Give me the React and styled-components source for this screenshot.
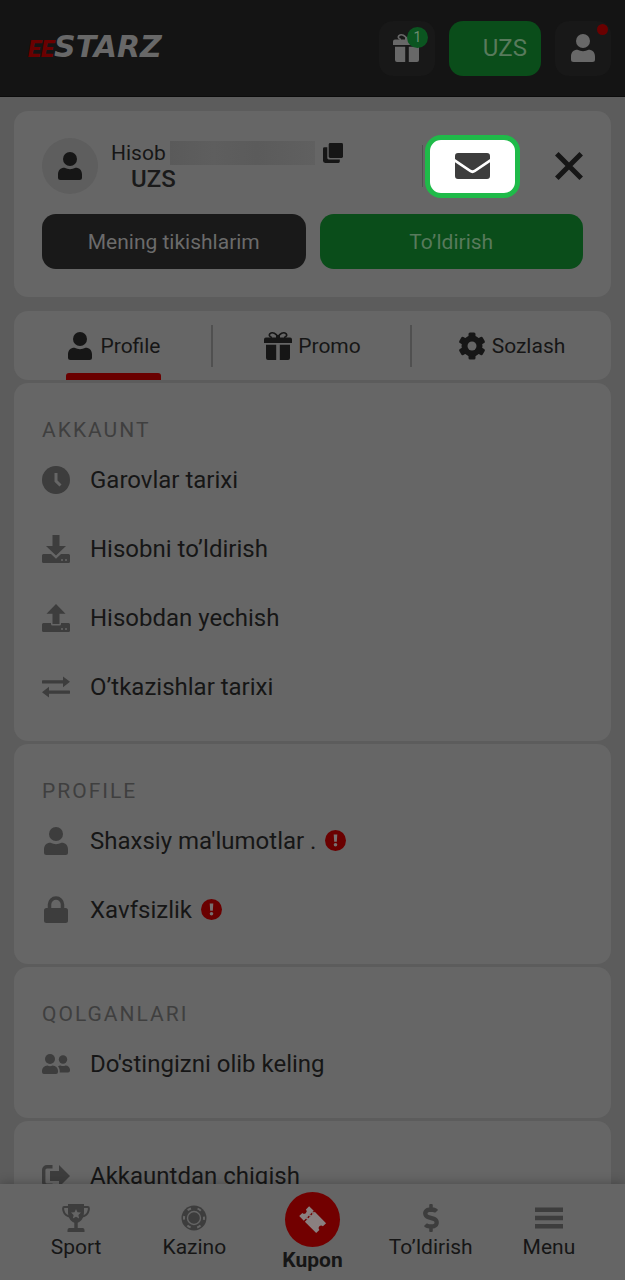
import React from 'react'
import styled, { createGlobalStyle, css } from 'styled-components'
import { FaDollarSign } from 'react-icons/fa'

const GlobalStyle = createGlobalStyle`
  * {
    box-sizing: border-box;
  }

  body {
    margin: 0;
    background: #5c5c5c;
    color: #161616;
    font-family: Roboto, 'Noto Sans', sans-serif;
    font-size: 21px;
    line-height: 26px;
  }

  a {
    color: inherit;
    text-decoration: none;
  }

  button {
    padding: 0;
    border: 0;
    background: none;
    color: inherit;
    font: inherit;
    cursor: pointer;
  }

  svg {
    display: block;
    flex: none;
  }
`

const Shell = styled.div`
  display: flex;
  flex-direction: column;
  height: 100vh;
`

const Header = styled.header`
  flex: none;
  display: flex;
  align-items: center;
  justify-content: space-between;
  height: 97px;
  padding: 0 14px 0 28px;
  background: #141414;
  border-bottom: 1px solid #0c0c0c;
`

const Logo = styled.a`
  display: flex;
  align-items: baseline;
  font-family: 'DejaVu Sans', sans-serif;
  font-size: 30px;
  font-weight: 700;
  font-style: italic;
  color: #686868;
`

const LogoMark = styled.span`
  font-family: Roboto, sans-serif;
  font-size: 24px;
  font-weight: 900;
  color: #6a0000;
`

const HeaderActions = styled.div`
  display: flex;
  gap: 14px;
`

const Tile = styled.button`
  position: relative;
  display: flex;
  align-items: center;
  justify-content: center;
  width: 56px;
  height: 55px;
  border-radius: 14px;
  background: #181818;
  color: #686868;
`

const Balance = styled(Tile)`
  justify-content: flex-end;
  width: 92px;
  padding-right: 14px;
  background: #0a4d1a;
  color: #587a5c;
  font-size: 24px;
`

const Badge = styled.span`
  position: absolute;
  top: 6px;
  right: 7px;
  width: 21px;
  height: 21px;
  border-radius: 50%;
  background: #0b5520;
  color: #6d8a70;
  font-size: 14px;
  line-height: 21px;
  text-align: center;
`

const Dot = styled.span`
  position: absolute;
  top: 3px;
  right: 3px;
  width: 11px;
  height: 11px;
  border-radius: 50%;
  background: #6a0000;
`

const Main = styled.main`
  flex: 1;
  min-height: 0;
  overflow-y: auto;
  scrollbar-width: none;
  padding: 14px;
`

const Card = styled.section`
  border-radius: 14px;
  background: #666666;
`

const AccountCard = styled(Card)`
  margin-bottom: 14px;
  padding: 27px 28px 28px;
`

const AccountRow = styled.div`
  display: flex;
  align-items: center;
  height: 56px;
  margin-bottom: 20px;
`

const Avatar = styled.div`
  display: flex;
  align-items: center;
  justify-content: center;
  width: 56px;
  height: 56px;
  margin-right: 13px;
  border-radius: 50%;
  background: #5e5e5e;
`

const AccountInfo = styled.div`
  flex: 1;
`

const AccountLine = styled.div`
  display: flex;
  align-items: center;
`

const HiddenId = styled.span`
  width: 145px;
  height: 24px;
  margin: 0 8px 0 4px;
  background: linear-gradient(90deg, #5a5a5a, #5e5e5e 30%, #5b5b5b 60%, #606060);
`

const Currency = styled.div`
  padding-left: 20px;
  font-size: 24px;
  font-weight: 500;
  color: #1a1a1a;
`

const MailSlot = styled.div`
  display: flex;
  align-items: center;
  gap: 2px;
  margin-right: 35px;

  &::before {
    content: '';
    width: 1px;
    height: 42px;
    background: #505050;
  }
`

const MailButton = styled.button`
  display: flex;
  align-items: center;
  justify-content: center;
  width: 95px;
  height: 63px;
  border: 5px solid #1fba49;
  border-radius: 16px;
  background: #ffffff;
  color: #3d3d3d;
`

const ButtonRow = styled.div`
  display: flex;
  gap: 14px;
`

const ActionButton = styled.button`
  flex: 1;
  height: 55px;
  border-radius: 14px;
  background: ${({ $green }) => ($green ? '#0a4d1a' : '#191919')};
  color: ${({ $green }) => ($green ? '#587a5c' : '#6b6b6b')};
`

const Tabs = styled.nav`
  display: flex;
  height: 69px;
  border-radius: 14px;
  background: #666666;
`

const Tab = styled.button`
  flex: 1;
  display: flex;
  justify-content: center;
  background: ${({ $last }) => ($last ? 'none' : 'linear-gradient(#505050, #505050) right center / 2px 42px no-repeat')};
`

const TabLabel = styled.span`
  position: relative;
  display: flex;
  align-items: center;
  gap: 6px;
  height: 69px;
  ${({ $active }) =>
    $active &&
    css`
      &::after {
        content: '';
        position: absolute;
        right: 0;
        bottom: 0;
        left: 0;
        height: 7px;
        border-radius: 3px 3px 0 0;
        background: #6a0000;
      }
    `}
`

const Group = styled(Card)`
  margin-top: 3px;
  padding: ${({ $untitled }) => ($untitled ? '20px' : '32px')} 28px 20px;
`

const GroupTitle = styled.h2`
  margin: 0;
  font-size: 21px;
  font-weight: 400;
  line-height: 30px;
  letter-spacing: 2px;
  color: #3f3f3f;
`

const Row = styled.a`
  display: flex;
  align-items: center;
  gap: 20px;
  height: 69px;
  font-size: 24px;

  > svg {
    color: #3d3d3d;
  }
`

const RowText = styled.span`
  display: flex;
  align-items: center;
  gap: 9px;
`

const BottomNav = styled.nav`
  flex: none;
  position: relative;
  display: flex;
  height: 96px;
  padding: 0 17px;
  background: #656565;
  box-shadow: 0 -1px 10px rgba(0, 0, 0, 0.25);
`

const NavItem = styled.a`
  flex: 1;
  display: flex;
  flex-direction: column;
  align-items: center;
  gap: ${({ $active }) => ($active ? '0' : '2px')};
  padding-top: ${({ $active }) => ($active ? '8px' : '20px')};
  font-weight: ${({ $active }) => ($active ? 700 : 400)};

  > svg {
    color: #3d3d3d;
  }
`

const Coupon = styled.span`
  display: flex;
  align-items: center;
  justify-content: center;
  width: 55px;
  height: 55px;
  border-radius: 50%;
  background: #720000;
  color: #8a8080;
`

const Icon = ({ size = 28, children, ...rest }) => (
  <svg width={size} height={size} viewBox="0 0 28 28" fill="currentColor" aria-hidden="true" {...rest}>
    {children}
  </svg>
)

const UserIcon = () => (
  <Icon>
    <circle cx="14" cy="7" r="7" />
    <path d="M8.500 15.800c3.500 1.800 7.500 1.800 11 0 4 0 6.500 2.700 6.500 6.700V25.500a2.500 2.500 0 0 1-2.500 2.500h-19A2.500 2.500 0 0 1 2 25.500v-3c0-4 2.500-6.700 6.500-6.700z" />
  </Icon>
)

const GiftIcon = () => (
  <Icon>
    <path
      d="M14 5.5C12.5 1.5 8.5-.3 6 1.6 4.6 3 5.6 5.2 8 5.5M14 5.5C15.5 1.5 19.500-.3 22 1.600 23.400 3 22.400 5.200 20 5.500"
      fill="none"
      stroke="currentColor"
      strokeWidth="1.6"
    />
    <rect x="12" y="3" width="4" height="4" rx="1" />
    <path d="M2 5.500h24a2 2 0 0 1 2 2V11H0V7.500a2 2 0 0 1 2-2z" />
    <path d="M2 12.800h10.200V28H4a2 2 0 0 1-2-2zM15.800 12.800H26V26a2 2 0 0 1-2 2h-8.200z" />
  </Icon>
)

const GearIcon = () => (
  <Icon>
    {[0, 60, 120].map((angle) => (
      <rect key={angle} x="10.500" y="0.500" width="7" height="27" rx="1.500" transform={`rotate(${angle} 14 14)`} />
    ))}
    <circle cx="14" cy="14" r="7.500" fill="none" stroke="currentColor" strokeWidth="6" />
    <circle cx="14" cy="14" r="4.500" fill="#666666" />
  </Icon>
)

const CopyIcon = () => (
  <Icon size={20}>
    <path d="M10 0h16a2 2 0 0 1 2 2v17a2 2 0 0 1-2 2H10a2 2 0 0 1-2-2V2a2 2 0 0 1 2-2z" />
    <path d="M2 6h4v15a2 2 0 0 0 2 2h15.500v3a2 2 0 0 1-2 2H3a3 3 0 0 1-3-3V8a2 2 0 0 1 2-2z" />
  </Icon>
)

const MailIcon = () => (
  <svg width="35" height="26" viewBox="0 0 35 26" fill="currentColor" aria-hidden="true">
    <path d="M3 0h29a3 3 0 0 1 3 3v3L19.500 16.500a3.500 3.500 0 0 1-4 0L0 6V3a3 3 0 0 1 3-3z" />
    <path d="M0 9.200l14.500 9.800a5 5 0 0 0 6 0L35 9.200V23a3 3 0 0 1-3 3H3a3 3 0 0 1-3-3z" />
  </svg>
)

const CloseIcon = () => (
  <Icon>
    <path d="M1.800 1.800l24.400 24.400M26.200 1.800l-24.400 24.400" stroke="currentColor" strokeWidth="5" />
  </Icon>
)

const ClockIcon = () => (
  <Icon>
    <circle cx="14" cy="14" r="14" />
    <path d="M14 7v8.200l4.500 4.300" fill="none" stroke="#666666" strokeWidth="3" />
  </Icon>
)

const Tray = ({ notch }) => (
  <>
    <path d={notch} />
    <circle cx="20" cy="25" r="1" fill="#666666" />
    <circle cx="24" cy="25" r="1" fill="#666666" />
  </>
)

const DepositIcon = () => (
  <Icon>
    <path d="M10.500 0h7v11H24L14 20.500 4 11h6.500z" />
    <Tray notch="M1.500 19H9l5 4.800 5-4.800h7.500a1.500 1.500 0 0 1 1.500 1.500v6a1.500 1.500 0 0 1-1.500 1.500h-25A1.500 1.500 0 0 1 0 26.500v-6A1.500 1.500 0 0 1 1.500 19z" />
  </Icon>
)

const WithdrawIcon = () => (
  <Icon>
    <path d="M14 0l9.500 9.800H17.500V20h-7V9.800h-6z" />
    <Tray notch="M1.500 19H9v1a1.500 1.500 0 0 0 1.500 1.500h7a1.500 1.500 0 0 0 1.500-1.500V19h7.500a1.500 1.500 0 0 1 1.500 1.500v6a1.500 1.500 0 0 1-1.500 1.500h-25A1.500 1.500 0 0 1 0 26.500v-6A1.500 1.500 0 0 1 1.500 19z" />
  </Icon>
)

const TransferIcon = () => (
  <Icon>
    <path d="M1 7.200h20V3.500L28 8.800 21 14.200v-3.800H1a1.600 1.600 0 0 1 0-3.200zM27 17.600H7v-3.800L0 19.200l7 5.300v-3.700h20a1.600 1.600 0 0 0 0-3.200z" />
  </Icon>
)

const LockIcon = () => (
  <Icon>
    <path d="M7.500 14V8.500a6.500 6.500 0 0 1 13 0V14" fill="none" stroke="currentColor" strokeWidth="3.500" />
    <rect x="2" y="12" width="24" height="15" rx="2.500" />
  </Icon>
)

const FriendsIcon = () => (
  <Icon>
    <circle cx="8" cy="9" r="5" />
    <circle cx="21" cy="9.500" r="4.200" />
    <path d="M0 21.500A5.500 5.500 0 0 1 5.500 15.500c1.500 1 3.500 1 5 0a5.500 5.500 0 0 1 5.500 6V22a2 2 0 0 1-2 2H2a2 2 0 0 1-2-2zM16 16.500c.8-.8 1.700-1 2.500-1 1.600.8 3.400.8 5 0A4.500 4.500 0 0 1 28 20.500a2 2 0 0 1-2 2h-8.300c.2-2.300-.2-4.300-1.700-6z" />
  </Icon>
)

const LogoutIcon = () => (
  <Icon>
    <path d="M10.500 4.700H5A3.300 3.300 0 0 0 1.700 8v12A3.300 3.300 0 0 0 5 23.300h5.500" fill="none" stroke="currentColor" strokeWidth="3.400" />
    <path d="M8 9h9V3l11 11-11 11v-6H8z" />
  </Icon>
)

const TrophyIcon = () => (
  <Icon>
    <path
      d="M6.500 3H2.200C.7 3 1 5.500 1.700 7.500c.9 3 3.300 4.800 6.800 5M21.500 3h4.300c1.500 0 1.200 2.500.5 4.500-.9 3-3.300 4.800-6.800 5"
      fill="none"
      stroke="currentColor"
      strokeWidth="2"
    />
    <path d="M6 0h16v8c0 5-2 9-6.300 10.800V24h4.800a2 2 0 0 1 2 2v2h-17v-2a2 2 0 0 1 2-2h4.800v-5.200C8 17 6 13 6 8z" />
    <path d="M14 5l1.500 3.200 3.500.4-2.600 2.400.7 3.500L14 12.800l-3.100 1.700.7-3.500L9 8.600l3.500-.4z" fill="#656565" />
  </Icon>
)

const ChipIcon = () => (
  <Icon>
    <circle cx="14" cy="14" r="12.500" />
    <circle cx="14" cy="14" r="10" fill="none" stroke="#656565" strokeWidth="2" strokeDasharray="3.800 6.672" strokeDashoffset="1.900" />
    <circle cx="14" cy="14" r="6.500" fill="none" stroke="#656565" strokeWidth="1.400" />
  </Icon>
)

const TicketIcon = () => (
  <Icon>
    <g transform="rotate(45 14 14)">
      <path d="M1.500 7H8v14H1.500v-4.500a2.500 2.500 0 0 0 0-5z" />
      <path d="M9.500 7h16v4.500a2.500 2.500 0 0 0 0 5V21h-16z" />
      <path d="M8.750 8v12" stroke="currentColor" strokeWidth="1.500" strokeDasharray="2 2" />
    </g>
  </Icon>
)

const MenuIcon = () => (
  <Icon>
    <path d="M0 3.500h28V8H0zM0 11.800h28v4.400H0zM0 20h28v4.400H0z" />
  </Icon>
)

const AlertIcon = () => (
  <svg width="21" height="21" viewBox="0 0 21 21" role="img" aria-label="!">
    <circle cx="10.500" cy="10.500" r="10.500" fill="#6a0000" />
    <path d="M8.700 4.500h3.600l-.5 7.200H9.200z" fill="#777070" />
    <circle cx="10.500" cy="14.800" r="1.800" fill="#777070" />
  </svg>
)

const groups = [
  {
    title: 'AKKAUNT',
    rows: [
      { icon: <ClockIcon />, text: 'Garovlar tarixi' },
      { icon: <DepositIcon />, text: 'Hisobni to’ldirish' },
      { icon: <WithdrawIcon />, text: 'Hisobdan yechish' },
      { icon: <TransferIcon />, text: 'O’tkazishlar tarixi' },
    ],
  },
  {
    title: 'PROFILE',
    rows: [
      { icon: <UserIcon />, text: "Shaxsiy ma'lumotlar .", alert: true },
      { icon: <LockIcon />, text: 'Xavfsizlik', alert: true },
    ],
  },
  {
    title: 'QOLGANLARI',
    rows: [{ icon: <FriendsIcon />, text: "Do'stingizni olib keling" }],
  },
  {
    rows: [{ icon: <LogoutIcon />, text: 'Akkauntdan chiqish' }],
  },
]

export default function App() {
  return (
    <Shell>
      <GlobalStyle />
      <Header>
        <Logo href="#">
          <LogoMark>EE</LogoMark>
          <span>STARZ</span>
        </Logo>
        <HeaderActions>
          <Tile aria-label="Promo">
            <GiftIcon />
            <Badge>1</Badge>
          </Tile>
          <Balance>UZS</Balance>
          <Tile aria-label="Profile">
            <UserIcon />
            <Dot />
          </Tile>
        </HeaderActions>
      </Header>

      <Main>
        <AccountCard>
          <AccountRow>
            <Avatar>
              <UserIcon />
            </Avatar>
            <AccountInfo>
              <AccountLine>
                <span>Hisob</span>
                <HiddenId />
                <button aria-label="Copy">
                  <CopyIcon />
                </button>
              </AccountLine>
              <Currency>UZS</Currency>
            </AccountInfo>
            <MailSlot>
              <MailButton aria-label="Messages">
                <MailIcon />
              </MailButton>
            </MailSlot>
            <button aria-label="Close">
              <CloseIcon />
            </button>
          </AccountRow>
          <ButtonRow>
            <ActionButton>Mening tikishlarim</ActionButton>
            <ActionButton $green>To’ldirish</ActionButton>
          </ButtonRow>
        </AccountCard>

        <Tabs>
          <Tab>
            <TabLabel $active>
              <UserIcon />
              Profile
            </TabLabel>
          </Tab>
          <Tab>
            <TabLabel>
              <GiftIcon />
              Promo
            </TabLabel>
          </Tab>
          <Tab $last>
            <TabLabel>
              <GearIcon />
              Sozlash
            </TabLabel>
          </Tab>
        </Tabs>

        {groups.map((group, i) => (
          <Group key={i} $untitled={!group.title}>
            {group.title && <GroupTitle>{group.title}</GroupTitle>}
            {group.rows.map((row) => (
              <Row key={row.text} href="#">
                {row.icon}
                <RowText>
                  {row.text}
                  {row.alert && <AlertIcon />}
                </RowText>
              </Row>
            ))}
          </Group>
        ))}
      </Main>

      <BottomNav>
        <NavItem href="#">
          <TrophyIcon />
          Sport
        </NavItem>
        <NavItem href="#">
          <ChipIcon />
          Kazino
        </NavItem>
        <NavItem href="#" $active>
          <Coupon>
            <TicketIcon />
          </Coupon>
          Kupon
        </NavItem>
        <NavItem href="#">
          <FaDollarSign size={28} />
          To’ldirish
        </NavItem>
        <NavItem href="#">
          <MenuIcon />
          Menu
        </NavItem>
      </BottomNav>
    </Shell>
  )
}
